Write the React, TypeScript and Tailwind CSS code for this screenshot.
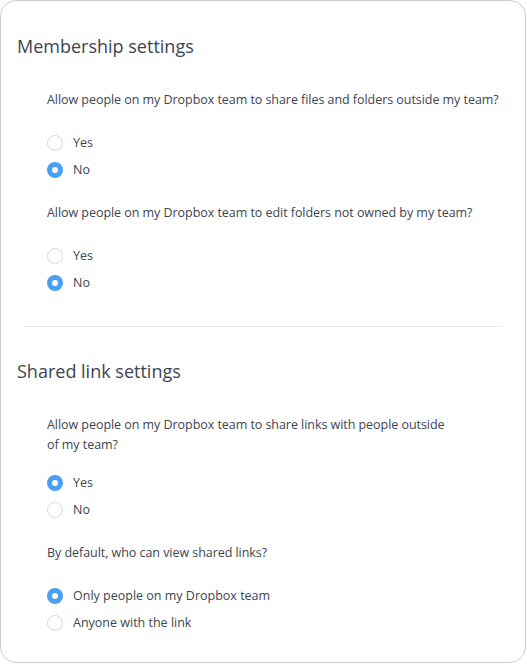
type Option = { label: string; checked: boolean };

type Question = { text: string; options: Option[]; narrow?: boolean };

const membership: Question[] = [
  {
    text: "Allow people on my Dropbox team to share files and folders outside my team?",
    options: [
      { label: "Yes", checked: false },
      { label: "No", checked: true },
    ],
  },
  {
    text: "Allow people on my Dropbox team to edit folders not owned by my team?",
    options: [
      { label: "Yes", checked: false },
      { label: "No", checked: true },
    ],
  },
];

const sharedLinks: Question[] = [
  {
    text: "Allow people on my Dropbox team to share links with people outside of my team?",
    narrow: true,
    options: [
      { label: "Yes", checked: true },
      { label: "No", checked: false },
    ],
  },
  {
    text: "By default, who can view shared links?",
    options: [
      { label: "Only people on my Dropbox team", checked: true },
      { label: "Anyone with the link", checked: false },
    ],
  },
];

function Radio({ checked }: { checked: boolean }) {
  if (checked) {
    return (
      <span className="flex h-4 w-4 shrink-0 items-center justify-center rounded-full bg-[#4b9ff3]">
        <span className="h-1.5 w-1.5 rounded-full bg-white" />
      </span>
    );
  }
  return <span className="h-4 w-4 shrink-0 rounded-full border border-[#d6d9de] bg-white" />;
}

function QuestionBlock({ question }: { question: Question }) {
  return (
    <div className="pl-[30px]">
      <p
        className={`text-[12.5px] leading-5 tracking-[-0.05px] text-[#3d4550] ${
          question.narrow ? "max-w-[405px]" : "whitespace-nowrap"
        }`}
      >
        {question.text}
      </p>
      <div className={`flex flex-col gap-[7px] ${question.narrow ? "mt-[18px]" : "mt-[23px]"}`}>
        {question.options.map((option) => (
          <label key={option.label} className="flex h-5 items-center gap-[10px]">
            <Radio checked={option.checked} />
            <span className="text-[12.5px] text-[#3d4550]">{option.label}</span>
          </label>
        ))}
      </div>
    </div>
  );
}

function Section({ title, questions }: { title: string; questions: Question[] }) {
  return (
    <section>
      <h2 className="text-[18px] leading-6 text-[#3b4552]">{title}</h2>
      <div className="mt-[32px] flex flex-col gap-[23px]">
        {questions.map((question) => (
          <QuestionBlock key={question.text} question={question} />
        ))}
      </div>
    </section>
  );
}

export default function App() {
  return (
    <div
      className="h-[663px] w-[526px] rounded-2xl border border-[#c9ced6] bg-white px-4 pt-[33px]"
      style={{ fontFamily: '"Open Sans", sans-serif' }}
    >
      <Section title="Membership settings" questions={membership} />
      <div className="mx-[7px] mt-[33px] mb-[32px] border-t border-[#e6e9ec]" />
      <Section title="Shared link settings" questions={sharedLinks} />
    </div>
  );
}
